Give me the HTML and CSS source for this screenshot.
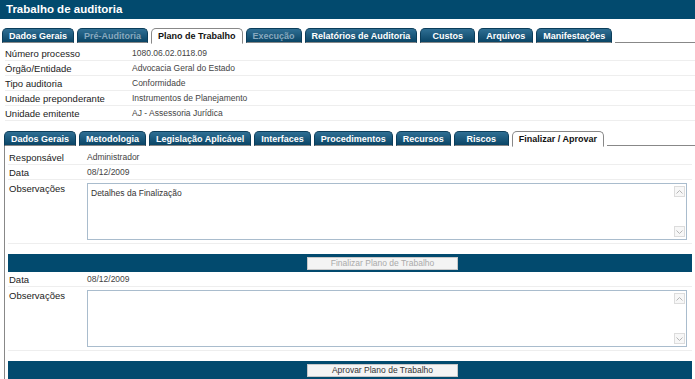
FILE: index.html
```html
<!DOCTYPE html>
<html lang="pt">
<head>
    <meta charset="UTF-8">
    <title>Trabalho de auditoria</title>
    <link rel="stylesheet" href="styles.css">
</head>
<body>
    <!-- Title -->
    <div class="titlebar">Trabalho de auditoria</div>

    <!-- Main tabs -->
    <div class="tabs main-tabs">
        <span class="tab">Dados Gerais</span>
        <span class="tab disabled">Pré-Auditoria</span>
        <span class="tab active">Plano de Trabalho</span>
        <span class="tab disabled">Execução</span>
        <span class="tab">Relatórios de Auditoria</span>
        <span class="tab">Custos</span>
        <span class="tab">Arquivos</span>
        <span class="tab">Manifestações</span>
        <span class="tab-fill"></span>
    </div>

    <!-- Process info -->
    <div class="info">
        <div class="info-row"><span class="info-label">Número processo</span><span class="info-value">1080.06.02.0118.09</span></div>
        <div class="info-row"><span class="info-label">Órgão/Entidade</span><span class="info-value">Advocacia Geral do Estado</span></div>
        <div class="info-row"><span class="info-label">Tipo auditoria</span><span class="info-value">Conformidade</span></div>
        <div class="info-row"><span class="info-label">Unidade preponderante</span><span class="info-value">Instrumentos de Planejamento</span></div>
        <div class="info-row"><span class="info-label">Unidade emitente</span><span class="info-value">AJ - Assessoria Jurídica</span></div>
    </div>

    <!-- Plan tabs -->
    <div class="tabs sub-tabs">
        <span class="tab">Dados Gerais</span>
        <span class="tab">Metodologia</span>
        <span class="tab">Legislação Aplicável</span>
        <span class="tab">Interfaces</span>
        <span class="tab">Procedimentos</span>
        <span class="tab">Recursos</span>
        <span class="tab">Riscos</span>
        <span class="tab active">Finalizar / Aprovar</span>
        <span class="tab-fill"></span>
    </div>

    <div class="panel">
        <!-- Finalizar -->
        <div class="row"><span class="label">Responsável</span><span class="value">Administrador</span></div>
        <div class="row"><span class="label">Data</span><span class="value">08/12/2009</span></div>
        <div class="row row-text">
            <span class="label">Observações</span>
            <div class="textbox">
                <div class="textbox-text">Detalhes da Finalização</div>
                <div class="scroll">
                    <span class="scroll-btn"><svg width="7" height="4" viewBox="0 0 7 4"><path d="M0.5 3.5 L3.5 0.5 L6.5 3.5" fill="none" stroke="#b5b5b5"/></svg></span>
                    <span class="scroll-btn"><svg width="7" height="4" viewBox="0 0 7 4"><path d="M0.5 0.5 L3.5 3.5 L6.5 0.5" fill="none" stroke="#b5b5b5"/></svg></span>
                </div>
            </div>
        </div>
        <div class="actionbar"><button class="btn" disabled>Finalizar Plano de Trabalho</button></div>

        <!-- Aprovar -->
        <div class="row"><span class="label">Data</span><span class="value">08/12/2009</span></div>
        <div class="row row-text">
            <span class="label">Observações</span>
            <div class="textbox">
                <div class="textbox-text"></div>
                <div class="scroll">
                    <span class="scroll-btn"><svg width="7" height="4" viewBox="0 0 7 4"><path d="M0.5 3.5 L3.5 0.5 L6.5 3.5" fill="none" stroke="#b5b5b5"/></svg></span>
                    <span class="scroll-btn"><svg width="7" height="4" viewBox="0 0 7 4"><path d="M0.5 0.5 L3.5 3.5 L6.5 0.5" fill="none" stroke="#b5b5b5"/></svg></span>
                </div>
            </div>
        </div>
        <div class="actionbar"><button class="btn">Aprovar Plano de Trabalho</button></div>
    </div>
</body>
</html>
```

FILE: styles.css
```css
/* General */
* {
    margin: 0;
    padding: 0;
    box-sizing: border-box;
}

body {
    font-family: 'Liberation Sans', Arial, sans-serif;
    background: #fff;
    color: #333;
    width: 695px;
    height: 379px;
    overflow: hidden;
}

.titlebar {
    height: 19px;
    background: #024a6e;
    color: #fff;
    font-size: 11.5px;
    font-weight: bold;
    line-height: 19px;
    padding-left: 6px;
}

/* Tabs */
.tabs {
    display: flex;
    align-items: flex-end;
    gap: 3px;
}

.main-tabs {
    margin-top: 9px;
    padding-left: 2px;
}

.sub-tabs {
    margin-top: 10px;
    padding-left: 4px;
}

.tab {
    min-width: 55px;
    height: 15px;
    padding: 0 6px;
    border: 1px solid #0b3d5a;
    border-bottom: 1px solid #888;
    border-radius: 5px 5px 0 0;
    background: linear-gradient(#2f6f94, #0a4566);
    color: #fff;
    font-size: 9px;
    font-weight: bold;
    line-height: 14px;
    text-align: center;
    white-space: nowrap;
}

.tab.disabled {
    color: #87a9bf;
}

.tab.active {
    height: 16px;
    background: #fff;
    color: #111;
    border: 1px solid #888;
    border-bottom: 1px solid #fff;
    margin-bottom: -1px;
    position: relative;
    line-height: 15px;
}

.tab-fill {
    flex: 1;
    border-bottom: 1px solid #888;
}

/* Process info */
.info {
    padding: 3px 0 0 5px;
}

.info-row {
    display: flex;
    align-items: center;
    height: 15px;
    border-bottom: 1px solid #eee;
}

.info-label {
    width: 127px;
    font-size: 9.5px;
    color: #222;
}

.info-value {
    font-size: 8.5px;
    color: #444;
}

/* Panel */
.panel {
    margin-left: 4px;
    border-left: 1px solid #888;
    padding: 4px 3px 0 3px;
}

.row {
    display: flex;
    align-items: center;
    height: 15px;
    border-bottom: 1px solid #eee;
}

.label {
    width: 79px;
    flex-shrink: 0;
    font-size: 9.5px;
    color: #222;
    padding-left: 1px;
}

.value {
    font-size: 8.5px;
    color: #444;
}

.row-text {
    align-items: flex-start;
    height: 64px;
    padding-top: 3px;
}

.textbox {
    display: flex;
    width: 600px;
    height: 57px;
    border: 1px solid #a9bccd;
    background: #fff;
}

.textbox-text {
    flex: 1;
    padding: 4px 3px;
    font-size: 8.5px;
    color: #333;
}

.scroll {
    width: 12px;
    display: flex;
    flex-direction: column;
    justify-content: space-between;
    padding: 2px 1px 2px 0;
}

.scroll-btn {
    width: 11px;
    height: 11px;
    border: 1px solid #dcdcdc;
    background: #f7f7f7;
    display: flex;
    align-items: center;
    justify-content: center;
}

.actionbar {
    display: flex;
    justify-content: center;
    align-items: center;
    height: 18px;
    margin-top: 10px;
    background: #024a6e;
    padding-left: 65px;
}

.btn {
    width: 151px;
    height: 13px;
    border: 1px solid #c8c8c8;
    background: #f4f4f4;
    font-family: 'Liberation Sans', Arial, sans-serif;
    font-size: 8.5px;
    color: #333;
    line-height: 11px;
}

.btn:disabled {
    color: #aaa;
}
```
